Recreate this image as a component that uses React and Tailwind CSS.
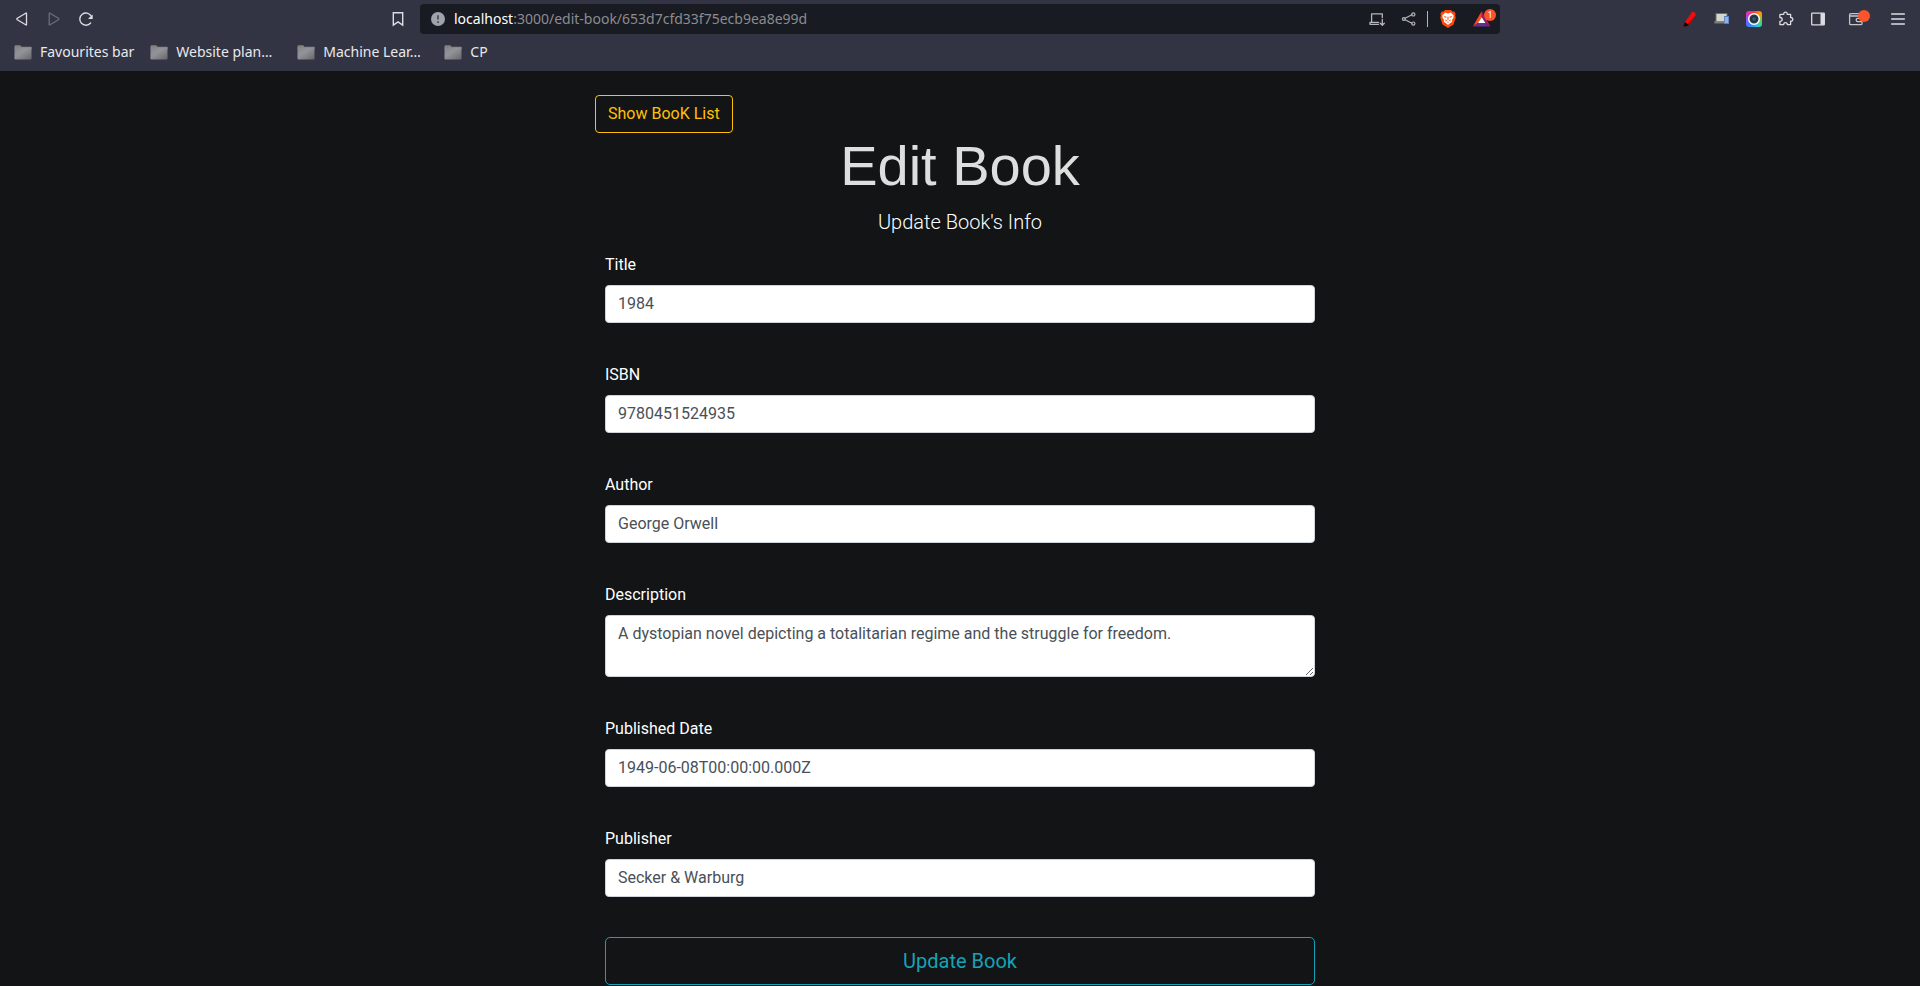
import React from "react";

const stroke = { fill: "none", stroke: "currentColor", strokeLinecap: "round", strokeLinejoin: "round" };

function IconButton({ label, className = "", children }) {
  return (
    <button type="button" aria-label={label} className={`flex h-4 w-4 shrink-0 items-center justify-center ${className}`}>
      {children}
    </button>
  );
}

function Icon({ children, className = "" }) {
  return (
    <svg viewBox="0 0 16 16" className={`h-4 w-4 shrink-0 overflow-visible ${className}`} aria-hidden="true">
      {children}
    </svg>
  );
}

function FolderIcon() {
  return (
    <svg viewBox="0 0 18 15" className="h-[15px] w-[18px] shrink-0" aria-hidden="true">
      <defs>
        <linearGradient id="folder" x1="0" y1="0" x2="1" y2="1">
          <stop offset="0" stopColor="#85868c" />
          <stop offset="0.4" stopColor="#93949a" />
          <stop offset="1" stopColor="#67676a" />
        </linearGradient>
      </defs>
      <path d="M0.5 1.5q0-1.2 1.2-1.2h4.6l1.2 1.5h9.3q1 0 1 1v1H.5z" fill="#85817d" />
      <path d="M0.5 2.6h17v10.6q0 1.2-1.2 1.2H1.7q-1.2 0-1.2-1.2z" fill="url(#folder)" />
    </svg>
  );
}

function NavIcons() {
  return (
    <div className="flex items-center justify-between px-[14px] text-[#dcdde2]">
      <div className="flex items-center gap-4">
        <IconButton label="Back">
          <Icon><path {...stroke} strokeWidth="1.3" d="M12.5 2.600v10.800q0 .9-.8.4L3.300 8.800q-.9-.8 0-1.600l8.400-5q.8-.5.8.4z" /></Icon>
        </IconButton>
        <IconButton label="Forward" className="text-[#6b6d7a]">
          <Icon><path {...stroke} strokeWidth="1.3" d="M3.200 2.600v10.800q0 .9.8.4l8.400-5q.9-.8 0-1.600l-8.400-5q-.8-.5-.8.4z" /></Icon>
        </IconButton>
        <IconButton label="Reload">
          <Icon>
            <path {...stroke} strokeWidth="1.4" d="M12.600 12A6.100 6.100 0 1 1 13.200 5.100" />
            <path d="M14.700 3.600v4.100q0 .4-.4.4h-3.600q-.7 0-.3-.5z" fill="currentColor" />
          </Icon>
        </IconButton>
      </div>
      <IconButton label="Bookmark this page">
        <Icon><path {...stroke} strokeLinejoin="miter" strokeWidth="1.4" d="M3.300 1.700h9.400v12.400L8 10.900l-4.700 3.200z" /></Icon>
      </IconButton>
    </div>
  );
}

function AddressBar() {
  return (
    <div className="flex h-[30px] min-w-0 items-center rounded bg-[#191b22] pr-1 pl-[10px] text-[#b4b5ba]">
      <Icon>
        <circle cx="8" cy="8" r="7" fill="#a0a2ab" />
        <path d="M8 4.300v4.300M8 10.300v1.700" stroke="#4b4d58" strokeWidth="1.800" fill="none" />
      </Icon>
      <div className="ml-2 min-w-0 flex-1 truncate text-[14px] leading-5 text-[#8b8c91]">
        <span className="text-white">localhost</span>:3000/edit-book/653d7cfd33f75ecb9ea8e99d
      </div>
      <div className="flex items-center">
        <IconButton label="Install app">
          <Icon>
            <path {...stroke} strokeWidth="1.300" d="M13.300 6.500V2.800H2.600v8M1 11.400v1.900h8.600M1 11.300h8.600M13.300 8.500v5.600M11.300 12.200l2 2 2-2" />
          </Icon>
        </IconButton>
        <IconButton label="Share" className="ml-4">
          <Icon>
            <path {...stroke} strokeWidth="1.200" d="M4.100 7.200l6.800-3.400M4.100 8.800l6.800 3.400" />
            <circle {...stroke} strokeWidth="1.200" cx="2.800" cy="8" r="1.400" />
            <circle {...stroke} strokeWidth="1.200" cx="12.300" cy="3.400" r="1.600" />
            <circle {...stroke} strokeWidth="1.200" cx="12.300" cy="12.600" r="1.600" />
          </Icon>
        </IconButton>
        <span className="mr-3 ml-[10px] h-4 w-px bg-[#b4b5ba]" />
        <IconButton label="Brave Shields">
          <svg viewBox="0 0 16 18" className="h-[18px] w-4 shrink-0" aria-hidden="true">
            <path fill="#fb4a0b" d="M5 0h6l1.500 1.600 1.800-.2L15.700 4l-.6 1.500.7 1.900-2.300 7.100L8 18l-5.500-3.500L.2 7.400l.7-1.900L.3 4l1.400-2.600 1.800.2z" />
            <path fill="#fff" d="M8 3.400l2.800-.8 2.900 3-.4 2.500-1.500 2.200.6 1.200-1.600 1.300-1.200.6L8 14.900l-1.600-1.500-1.200-.6-1.600-1.300.6-1.200-1.500-2.200-.4-2.500 2.900-3z" />
            <path fill="#fb4a0b" d="M4 6.100l2.400.7-.1.900-1.800-.4zM12 6.100l-2.400.7.1.900 1.800-.4zM7.600 6.500h.8l.2 3L8 10.200l-.6-.7zM5.400 9.400l1.700 1.200-1.500.8zM10.600 9.400l-1.700 1.200 1.500.8zM7 12.100l1-.5 1 .5-1 .7z" />
          </svg>
        </IconButton>
        <button type="button" aria-label="Brave Rewards" className="relative ml-4 h-5 w-6">
          <svg viewBox="0 0 24 20" className="h-5 w-6" aria-hidden="true">
            <path fill="#ff4724" d="M9.700 2v6.300L6 14 .9 17.500z" />
            <path fill="#9e1f63" d="M9.700 2l8.800 15.500-5.100-3.500-3.700-5.700z" />
            <path fill="#662d91" d="M.9 17.500L6 14h7.400l5.100 3.500z" />
            <path fill="#fff" d="M9.700 8.300l3.700 5.700H6z" />
          </svg>
          <span className="absolute top-0 right-0 flex h-3 w-3 items-center justify-center rounded-full bg-[#fb542b] text-[9px] leading-3 text-white">
            1
          </span>
        </button>
      </div>
    </div>
  );
}

function ExtensionIcons() {
  return (
    <div className="flex items-center justify-end gap-4 pr-[14px] text-[#dcdde2]">
      <IconButton label="Marker">
        <Icon>
          <path fill="#f20d0d" d="M10.400.4l3.200 1.500-.2 2.600-6.300 9.400-4.200-2.600z" />
          <path fill="#b80000" d="M13.400 4.500l-6.300 9.400-1.700-1z" />
          <path fill="#0a0a0a" d="M2.900 11.300l4.200 2.600-3.300 1.500-2.800.5z" />
          <path fill="#e60000" d="M1 15.200h1.700l-.5.800H.5z" />
        </Icon>
      </IconButton>
      <IconButton label="Responsive preview">
        <Icon>
          <path fill="#6c6f6b" d="M1.500 2h12v9h-12z" />
          <path fill="#d3d7cf" d="M2.500 3h10v7h-10z" />
          <path fill="#55584f" d="M.5 10.500h11v2.500H.5z" />
          <path fill="#a4a79f" d="M.5 10.500h11v1H.5z" />
          <path fill="#5b82b8" d="M10 5h5v8h-5z" />
          <path fill="#8fb3e2" d="M10.800 6h3.400v6h-3.400z" />
        </Icon>
      </IconButton>
      <IconButton label="Color picker">
        <span className="flex h-4 w-4 items-center justify-center rounded-[3px] bg-[conic-gradient(from_45deg,#ff9800,#4cd964_70deg,#22c7e8_110deg,#3a7bff_180deg,#9a4bff_225deg,#ff2d88_280deg,#ff3b30_320deg,#ff9800)]">
          <svg viewBox="0 0 14 14" className="h-[14px] w-[14px]" aria-hidden="true">
            <circle cx="7" cy="7" r="5.300" fill="#2b3a48" stroke="#fff" strokeWidth="1.500" />
            <circle cx="7" cy="7" r="2.500" fill="#34566a" stroke="#1d2a36" />
          </svg>
        </span>
      </IconButton>
      <IconButton label="Extensions">
        <Icon>
          <path {...stroke} strokeWidth="1.300" d="M2.500 3.300h3.300c-.2-1.600.6-2.200 1.700-2.200s1.900.6 1.700 2.200h3.400v3.200c1.500-.1 2.200.9 2.200 1.900s-.7 2-2.200 1.800v3.400H9.300c0-1.300-.8-1.900-1.800-1.900s-1.800.6-1.800 1.900H1.900v-3.200c1.600 0 2.300-.9 2.300-2s-.7-1.900-2.300-1.900V3.900q0-.6.6-.6z" />
        </Icon>
      </IconButton>
      <IconButton label="Sidebar">
        <Icon>
          <rect {...stroke} strokeWidth="1.300" x="1.700" y="2.200" width="12.600" height="11.600" rx=".6" />
          <path fill="currentColor" d="M10.500 2.200h3.800v11.600h-3.800z" />
        </Icon>
      </IconButton>
      <IconButton label="Wallet" className="relative ml-[6px]">
        <Icon className="text-[#c4c5cb]">
          <path {...stroke} strokeWidth="1.300" d="M13 5V2.600H2.800Q1.600 2.600 1.600 3.800v8.700q0 1.200 1.200 1.200h10q1.200 0 1.200-1.200V5H2M14 7.300H9.700q-1.500 0-1.500 1.700t1.500 1.700H14" />
        </Icon>
        <span className="absolute -top-px -right-[6px] h-3 w-3 rounded-full bg-[#fb542b]" />
      </IconButton>
      <IconButton label="Menu" className="ml-[10px]">
        <Icon><path {...stroke} strokeWidth="1.500" d="M1.700 3h12.600M1.700 8h12.600M1.700 13h12.600" /></Icon>
      </IconButton>
    </div>
  );
}

const bookmarks = ["Favourites bar", "Website plan…", "Machine Lear…", "CP"];

function BrowserChrome() {
  return (
    <header className="bg-[#323443] pt-1 pb-[9px] font-['Noto_Sans',sans-serif]">
      <div className="grid grid-cols-[7fr_18fr_7fr] items-center">
        <NavIcons />
        <AddressBar />
        <ExtensionIcons />
      </div>
      <nav aria-label="Bookmarks" className="flex h-7 items-end gap-4 pl-[14px]">
        {bookmarks.map((name) => (
          <button key={name} type="button" className="flex h-5 items-center gap-2 text-[14px] leading-5 text-[#e8e9ec]">
            <FolderIcon />
            <span className={name.endsWith("…") ? "w-[105px] text-left" : ""}>{name}</span>
          </button>
        ))}
      </nav>
    </header>
  );
}

const fields = [
  { id: "title", label: "Title", value: "1984" },
  { id: "isbn", label: "ISBN", value: "9780451524935" },
  { id: "author", label: "Author", value: "George Orwell" },
  {
    id: "description",
    label: "Description",
    value: "A dystopian novel depicting a totalitarian regime and the struggle for freedom.",
    multiline: true,
  },
  { id: "published_date", label: "Published Date", value: "1949-06-08T00:00:00.000Z" },
  { id: "publisher", label: "Publisher", value: "Secker & Warburg" },
];

const control =
  "block w-full rounded border border-[#ced4da] bg-white px-3 py-[6px] text-[16px] leading-6 text-[#495057] outline-none";

function Field({ id, label, value, multiline }) {
  return (
    <div className="mb-10">
      <label htmlFor={id} className="mb-2 block text-[16px] leading-6 text-white">
        {label}
      </label>
      {multiline ? (
        <textarea id={id} name={id} rows={2} defaultValue={value} className={`${control} resize-y`} />
      ) : (
        <input id={id} name={id} type="text" defaultValue={value} className={control} />
      )}
    </div>
  );
}

export default function App() {
  return (
    <div className="min-h-screen bg-[#121415] font-[Roboto,sans-serif] text-white">
      <BrowserChrome />
      <main className="mx-auto max-w-[730px] pt-6">
        <a
          href="#books"
          className="block w-fit rounded border border-[#ffc107] px-3 py-[6px] text-[16px] leading-6 text-[#ffc107]"
        >
          Show BooK List
        </a>
        <h1 className="mb-2 text-center font-['Liberation_Sans',sans-serif] text-[56px] leading-[66px] text-[#dedede]">
          Edit Book
        </h1>
        <p className="mb-4 text-center text-[20px] leading-[30px] font-light">Update Book's Info</p>
        <form className="px-[10px]" onSubmit={(e) => e.preventDefault()}>
          {fields.map((f) => (
            <Field key={f.id} {...f} />
          ))}
          <button
            type="submit"
            className="block w-full rounded-[5px] border border-[#17a2b8] px-4 py-2 text-[20px] leading-[30px] text-[#17a2b8]"
          >
            Update Book
          </button>
        </form>
      </main>
    </div>
  );
}
